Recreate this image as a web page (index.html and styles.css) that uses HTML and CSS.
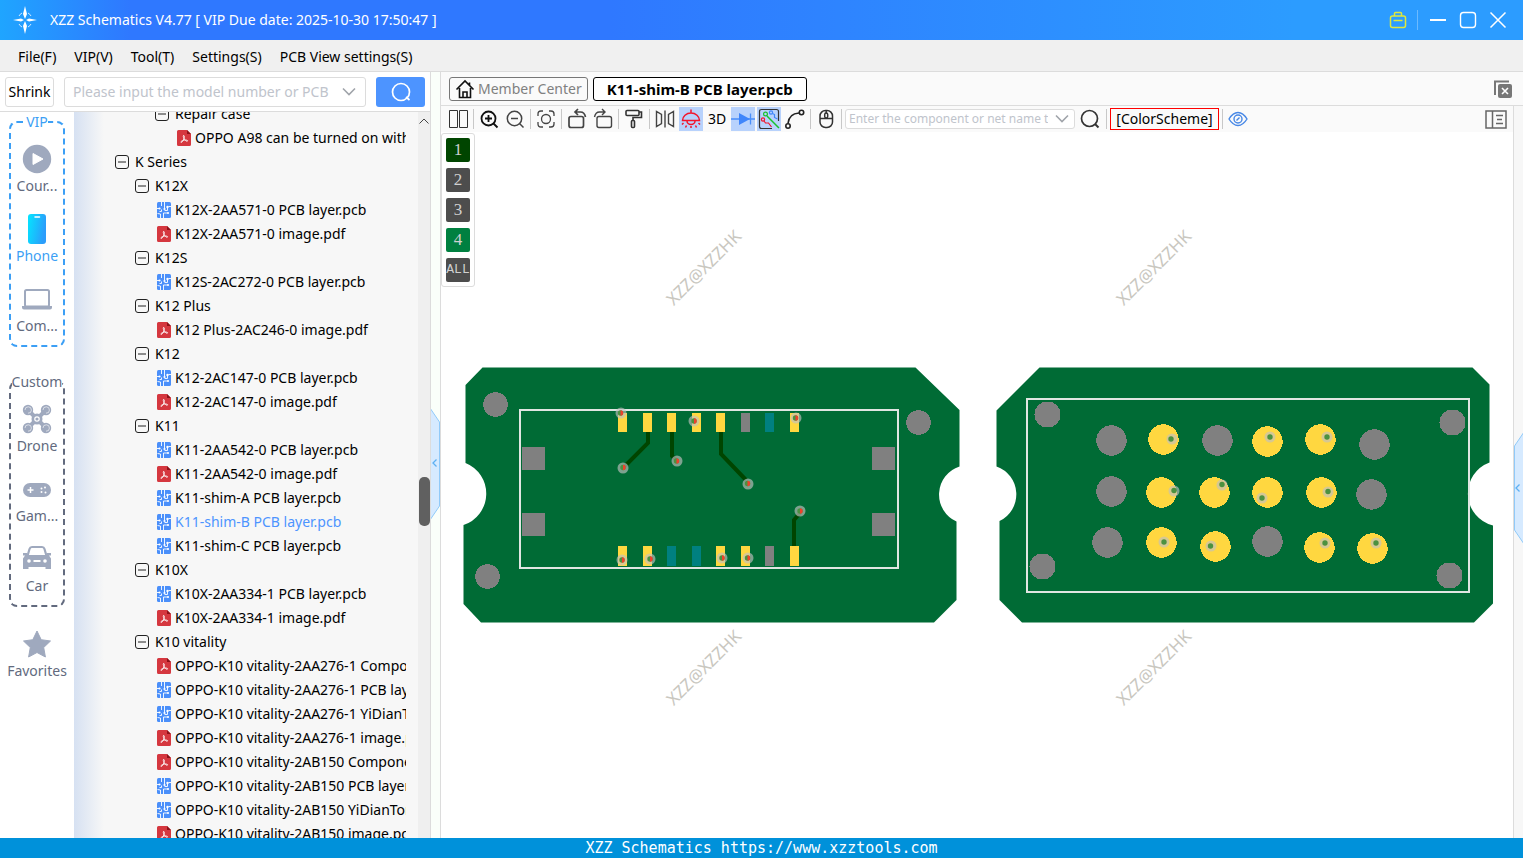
FILE: index.html
```html
<!DOCTYPE html>
<html lang="en">
<head>
<meta charset="utf-8">
<title>XZZ Schematics</title>
<link rel="stylesheet" href="styles.css">
</head>
<body>
<svg class="defs" aria-hidden="true">
  <defs>
    <linearGradient id="phone-fill" x1="0" y1="0" x2="1" y2="0.3"><stop offset="0" stop-color="#04e6ff"/><stop offset="1" stop-color="#2b9dfb"/></linearGradient>
    <symbol id="minus" viewBox="0 0 14 14"><rect x="0.5" y="0.5" width="13" height="13" rx="2.5" fill="none" stroke="#222"/><path d="M3 7h8" stroke="#222"/></symbol>
    <symbol id="pdf" viewBox="0 0 14 16"><path d="M1.500 0H10l4 4v10.500a1.500 1.500 0 0 1-1.500 1.500h-11A1.500 1.500 0 0 1 0 14.500v-13A1.500 1.500 0 0 1 1.500 0z" fill="#d5373f"/><path d="M10 0l4 4h-4z" fill="#8c1219"/><path d="M6.500 5.500c1.200-.3 1 2 .5 3.200C6 11 5 12.500 4 12.400c-1-.6 1.500-2 3.500-2.300 2-.3 3.500.3 3 1-.8.800-2.800-1.200-3.600-2.700-.5-1.200-.9-2.500-.4-2.900z" fill="none" stroke="#fff" stroke-width="0.900"/></symbol>
    <symbol id="pcb" viewBox="0 0 14 16"><rect width="14" height="16" rx="1.500" fill="#4a8ffa"/><g fill="none" stroke="#fff" stroke-width="0.900"><path d="M4.500 0v4M7.500 0v6.500M0 6.500h2M3.500 16v-4L0.500 11.500M6.500 16v-5h4M14 4.500h-2.500M10.500 6V8.500H7.500M4.500 7.500v2h-2"/></g><g fill="#fff"><circle cx="7.500" cy="7" r="1.100"/><circle cx="10.500" cy="5" r="1.200"/><circle cx="2.500" cy="6.500" r="1.100"/><circle cx="11" cy="11" r="1.100"/></g></symbol>
    <symbol id="chevron" viewBox="0 0 14 10"><path d="M1 1.500l6 6 6-6" fill="none" stroke="#a0a4aa" stroke-width="1.600"/></symbol>
    <symbol id="magnifier" viewBox="0 0 22 22"><circle cx="10.500" cy="10.500" r="8" fill="none" stroke="currentColor" stroke-width="1.700"/><path d="M16 16l3.500 3.500" stroke="currentColor" stroke-width="2"/></symbol>
  </defs>
</svg>

<div class="app">
  <header class="titlebar">
    <svg class="logo" viewBox="0 0 26 28" width="26" height="28"><g fill="none" stroke="#d5ecff" stroke-width="1"><path d="M7 10a7 7 0 0 1 3-3M16 7a7 7 0 0 1 3 3M19 18a7 7 0 0 1-3 3M10 21a7 7 0 0 1-3-3"/></g><path d="M13 0l2 8-2 5-2-5zM13 28l2-8-2-5-2 5zM1 14l8-1.600 3 1.600-3 1.600zM25 14l-8-1.600-3 1.600 3 1.600z" fill="#fff"/></svg>
    <h1 class="title">XZZ Schematics V4.77 [ VIP Due date: 2025-10-30 17:50:47 ]</h1>
    <button class="win-btn" aria-label="License"><svg viewBox="0 0 18 18" width="18" height="18" fill="none" stroke="#dfe83c" stroke-width="1.500"><rect x="1.500" y="5" width="15" height="11.500" rx="2"/><path d="M5.500 5V2.500q0-1 1-1h5q1 0 1 1V5M4.500 9.500h9"/></svg></button>
    <span class="win-sep"></span>
    <button class="win-btn" aria-label="Minimize"><svg viewBox="0 0 18 18" width="18" height="18"><path d="M1 9h16" stroke="#fff" stroke-width="2"/></svg></button>
    <button class="win-btn" aria-label="Maximize"><svg viewBox="0 0 18 18" width="18" height="18"><rect x="1.500" y="1.500" width="15" height="15" rx="3" fill="none" stroke="#fff" stroke-width="1.400"/></svg></button>
    <button class="win-btn" aria-label="Close"><svg viewBox="0 0 18 18" width="18" height="18"><path d="M1.500 1.500l15 15M16.500 1.500l-15 15" stroke="#fff" stroke-width="1.500"/></svg></button>
  </header>

  <nav class="menubar">
    <button>File(F)</button><button>VIP(V)</button><button>Tool(T)</button><button>Settings(S)</button><button>PCB View settings(S)</button>
  </nav>

  <div class="workspace">
    <section class="browser">
      <form class="search-row">
        <button type="button" class="shrink">Shrink</button>
        <div class="combo"><input type="text" aria-label="Model number" placeholder="Please input the model number or PCB"><button type="button" aria-label="Open list"><svg width="14" height="10"><use href="#chevron"/></svg></button></div>
        <button type="button" class="go" aria-label="Search"><svg viewBox="0 0 22 22" width="22" height="22"><circle cx="11" cy="11" r="8.500" fill="none" stroke="#fff" stroke-width="1.700"/><path d="M16 16l3.500 3" stroke="#fff" stroke-width="1.700"/></svg></button>
      </form>
      <div class="browser-body">
        <aside class="sidebar">
          <fieldset class="group vip"><legend>VIP</legend>
            <button class="cat"><svg viewBox="0 0 32 32" width="32" height="32"><circle cx="16" cy="16" r="14.200" fill="#9fa9be"/><path d="M12 10.500v11l10-5.500z" fill="#fff" stroke="#fff" stroke-linejoin="round"/></svg><span>Cour...</span></button>
            <button class="cat current"><svg viewBox="0 0 32 32" width="32" height="32"><rect x="7" y="1" width="18" height="30" rx="3" fill="url(#phone-fill)"/><path d="M14 4h4.500" stroke="#fff" stroke-width="1.500" stroke-linecap="round"/></svg><span>Phone</span></button>
            <button class="cat"><svg viewBox="0 0 32 32" width="32" height="32"><rect x="4" y="7" width="24" height="16.500" rx="1.500" fill="none" stroke="#9fa9be" stroke-width="2"/><path d="M1 23h11l1 1h6l1-1h11v1.500q0 2-2 2H3q-2 0-2-2z" fill="#9fa9be"/></svg><span>Com...</span></button>
          </fieldset>
          <fieldset class="group custom"><legend>Custom</legend>
            <button class="cat"><svg viewBox="0 0 32 32" width="32" height="32"><path d="M7 7l18 18M25 7L7 25" stroke="#9fa9be" stroke-width="4"/><g fill="#9fa9be"><circle cx="7" cy="7" r="5.200"/><circle cx="25" cy="7" r="5.200"/><circle cx="7" cy="25" r="5.200"/><circle cx="25" cy="25" r="5.200"/><circle cx="16" cy="16" r="5.500"/></g><g fill="none" stroke="#fff"><path d="M4 7a3.200 3.200 0 1 1 3 3.200M22 7a3.200 3.200 0 1 1 3 3.200M4 25a3.200 3.200 0 1 1 3 3.200M22 25a3.200 3.200 0 1 1 3 3.200" stroke-width="0.600"/><circle cx="16" cy="16" r="2.200" stroke-width="1.200"/></g></svg><span>Drone</span></button>
            <button class="cat"><svg viewBox="0 0 32 32" width="32" height="32"><rect x="2" y="10" width="28" height="14" rx="7" fill="#9fa9be"/><path d="M6.500 17h6M9.500 14v6" stroke="#fff" stroke-width="1.500"/><g fill="#fff"><circle cx="20.500" cy="15.500" r="1"/><circle cx="24" cy="14.500" r="1"/><circle cx="20.500" cy="19" r="1"/><circle cx="24.500" cy="19.500" r="1"/></g></svg><span>Gam...</span></button>
            <button class="cat"><svg viewBox="0 0 32 32" width="32" height="32"><path d="M6.500 13l2-7q.6-2 2.500-2h10q1.900 0 2.500 2l2 7" fill="none" stroke="#9fa9be" stroke-width="2.200"/><path d="M2 10h4v2h20v-2h4v2.500h-2l2 3V26h-5.500v-2h-17v2H2V15.500l2-3H2z" fill="#9fa9be"/><circle cx="8" cy="18" r="1.800" fill="#fff"/><circle cx="24" cy="18" r="1.800" fill="#fff"/><path d="M12.500 18h7" stroke="#fff" stroke-width="2"/></svg><span>Car</span></button>
          </fieldset>
          <button class="cat favorites"><svg viewBox="0 0 32 32" width="32" height="32"><path d="M16 3l4.200 8.700 9.300 1.300-6.800 6.500 1.700 9.500L16 24.500 7.600 29l1.700-9.500L2.500 13l9.300-1.300z" fill="#9fa9be" stroke="#9fa9be" stroke-linejoin="round"/></svg><span>Favorites</span></button>
        </aside>

        <div class="tree-pane">
          <ul class="tree">
            <li class="d3"><svg><use href="#minus"/></svg>Repair case</li>
            <li class="d4 leaf"><svg><use href="#pdf"/></svg>OPPO A98 can be turned on without display</li>
            <li class="d1"><svg><use href="#minus"/></svg>K Series</li>
            <li class="d2"><svg><use href="#minus"/></svg>K12X</li>
            <li class="d3 leaf"><svg><use href="#pcb"/></svg>K12X-2AA571-0 PCB layer.pcb</li>
            <li class="d3 leaf"><svg><use href="#pdf"/></svg>K12X-2AA571-0 image.pdf</li>
            <li class="d2"><svg><use href="#minus"/></svg>K12S</li>
            <li class="d3 leaf"><svg><use href="#pcb"/></svg>K12S-2AC272-0 PCB layer.pcb</li>
            <li class="d2"><svg><use href="#minus"/></svg>K12 Plus</li>
            <li class="d3 leaf"><svg><use href="#pdf"/></svg>K12 Plus-2AC246-0 image.pdf</li>
            <li class="d2"><svg><use href="#minus"/></svg>K12</li>
            <li class="d3 leaf"><svg><use href="#pcb"/></svg>K12-2AC147-0 PCB layer.pcb</li>
            <li class="d3 leaf"><svg><use href="#pdf"/></svg>K12-2AC147-0 image.pdf</li>
            <li class="d2"><svg><use href="#minus"/></svg>K11</li>
            <li class="d3 leaf"><svg><use href="#pcb"/></svg>K11-2AA542-0 PCB layer.pcb</li>
            <li class="d3 leaf"><svg><use href="#pdf"/></svg>K11-2AA542-0 image.pdf</li>
            <li class="d3 leaf"><svg><use href="#pcb"/></svg>K11-shim-A PCB layer.pcb</li>
            <li class="d3 leaf selected"><svg><use href="#pcb"/></svg>K11-shim-B PCB layer.pcb</li>
            <li class="d3 leaf"><svg><use href="#pcb"/></svg>K11-shim-C PCB layer.pcb</li>
            <li class="d2"><svg><use href="#minus"/></svg>K10X</li>
            <li class="d3 leaf"><svg><use href="#pcb"/></svg>K10X-2AA334-1 PCB layer.pcb</li>
            <li class="d3 leaf"><svg><use href="#pdf"/></svg>K10X-2AA334-1 image.pdf</li>
            <li class="d2"><svg><use href="#minus"/></svg>K10 vitality</li>
            <li class="d3 leaf"><svg><use href="#pdf"/></svg>OPPO-K10 vitality-2AA276-1 Component.pdf</li>
            <li class="d3 leaf"><svg><use href="#pcb"/></svg>OPPO-K10 vitality-2AA276-1 PCB layer.pcb</li>
            <li class="d3 leaf"><svg><use href="#pcb"/></svg>OPPO-K10 vitality-2AA276-1 YiDianTong.pcb</li>
            <li class="d3 leaf"><svg><use href="#pdf"/></svg>OPPO-K10 vitality-2AA276-1 image.pdf</li>
            <li class="d3 leaf"><svg><use href="#pdf"/></svg>OPPO-K10 vitality-2AB150 Component.pdf</li>
            <li class="d3 leaf"><svg><use href="#pcb"/></svg>OPPO-K10 vitality-2AB150 PCB layer.pcb</li>
            <li class="d3 leaf"><svg><use href="#pcb"/></svg>OPPO-K10 vitality-2AB150 YiDianTong.pcb</li>
            <li class="d3 leaf"><svg><use href="#pdf"/></svg>OPPO-K10 vitality-2AB150 image.pdf</li>
          </ul>
        </div>
        <div class="scrollbar"><svg viewBox="0 0 12 8" width="12" height="8"><path d="M1.500 6.500L6 2l4.500 4.500" fill="none" stroke="#444"/></svg><div class="track"><div class="thumb"></div></div></div>
      </div>
    </section>

    <div class="splitter"><svg viewBox="0 0 9 112" width="9" height="112"><path d="M-1 0L8.500 14v84L-1 112z" fill="#d6eaff" stroke="#90caf9"/><path d="M5.500 51.500l-3.500 3.500 3.500 3.500" fill="none" stroke="#5eb0f2" stroke-width="1.300"/></svg></div>

    <main class="viewer">
      <div class="tabs">
        <button class="tab"><svg viewBox="0 0 20 20" width="20" height="20" fill="none" stroke="#111" stroke-width="1.600"><path d="M1.500 10.500L10 2l8.500 8.500M4.500 9v9.500h11V9M8 18v-5h4v5M14.500 6V3.500"/></svg>Member Center</button>
        <button class="tab active">K11-shim-B PCB layer.pcb</button>
        <button class="close-all" aria-label="Close all tabs"><svg viewBox="0 0 18 18" width="18" height="18"><path d="M1 15V1.500h14" fill="none" stroke="#777" stroke-width="2"/><rect x="4" y="4" width="14" height="14" rx="2" fill="#777"/><path d="M8 8l6 6M14 8l-6 6" stroke="#fff" stroke-width="1.600"/></svg></button>
      </div>
      <div class="viewer-body">
        <div class="stage">
          <div class="toolbar">
            <button class="tool" aria-label="Split view"><svg viewBox="0 0 24 24"><path d="M3.500 3.500h8v17h-8zM13.500 3.500h8v17h-8z" fill="none" stroke="#333" stroke-width="1"/></svg></button>
            <span class="sep"></span>
            <button class="tool" aria-label="Zoom in"><svg viewBox="0 0 24 24" fill="none" stroke="#111" stroke-width="1.800"><circle cx="11.500" cy="11.500" r="7"/><path d="M16.500 16.500l4 4M8 11.500h7M11.500 8v7"/></svg></button>
            <button class="tool" aria-label="Zoom out"><svg viewBox="0 0 24 24" fill="none" stroke="#444" stroke-width="1.500"><circle cx="11.500" cy="11.500" r="7.200"/><path d="M16.500 16.500l4 4M8 11.500h7"/></svg></button>
            <span class="sep"></span>
            <button class="tool" aria-label="Fit"><svg viewBox="0 0 24 24" fill="none" stroke="#444" stroke-width="1.300"><circle cx="12" cy="12" r="4.500"/><path d="M4 9V7q0-3 3-3h2M15 4h2q3 0 3 3v2M20 15v2q0 3-3 3h-2M9 20H7q-3 0-3-3v-2"/></svg></button>
            <span class="sep"></span>
            <button class="tool" aria-label="Rotate left"><svg viewBox="0 0 24 24" fill="none" stroke="#444" stroke-width="1.700"><rect x="4" y="9.500" width="14.500" height="11" rx="2"/><path d="M20.500 10q-1-5-5-5H10M13 2l-3 3 3 3"/></svg></button>
            <button class="tool" aria-label="Rotate right"><svg viewBox="0 0 24 24" fill="none" stroke="#444" stroke-width="1.400"><rect x="6" y="9.500" width="14.500" height="11" rx="2"/><path d="M3.500 10q1-5 5-5H14M11 2l3 3-3 3"/></svg></button>
            <span class="sep"></span>
            <button class="tool" aria-label="Paint"><svg viewBox="0 0 24 24" fill="none" stroke="#333" stroke-width="1.600"><rect x="4" y="3.500" width="13" height="5" rx="1"/><path d="M17 5h2.500v5.500H11v3"/><rect x="9.500" y="13.500" width="3" height="7" rx="1"/></svg></button>
            <span class="sep"></span>
            <button class="tool" aria-label="Mirror"><svg viewBox="0 0 24 24" fill="none" stroke="#444" stroke-width="1.400"><path d="M3.500 4.500v15l5-3v-9zM12 3.500v17M20.500 4.500v15l-5-3v-9z"/></svg></button>
            <button class="tool on" aria-label="Lamp"><svg viewBox="0 0 24 24" fill="none" stroke="#f2152b" stroke-width="1.500"><path d="M3.500 13.500a8.500 7.500 0 0 1 17 0zM12 2.500v3.500M8 14a4 3.500 0 0 0 8 0M4.500 16l-1.500 1.500M19.500 16l1.500 1.500M7.500 18.500l-1 2M12 19v2M16.500 18.500l1 2"/></svg></button>
            <button class="tool">3D</button>
            <button class="tool on" aria-label="Diode"><svg viewBox="0 0 24 24"><path d="M0 12h24M19.500 6.500v11" stroke="#4a8ffa" stroke-width="1.300"/><path d="M8 6v12l11-6z" fill="#3f86fb"/></svg></button>
            <button class="tool on" aria-label="Routing"><svg viewBox="0 0 24 24" fill="none" stroke-width="1.200"><path d="M15 21.500H4.500q-2 0-2-2v-15q0-2 2-2h15q2 0 2 2V14" stroke="#333"/><path d="M10 9l12 12" stroke="#18c22c" stroke-width="1.500"/><circle cx="8.500" cy="7" r="1.900" stroke="#18c22c"/><circle cx="14" cy="5.500" r="1.600" stroke="#3f86fb"/><path d="M15.500 6.500l2 1v3l3 1.500" stroke="#3f86fb"/><circle cx="6" cy="12.500" r="1.600" stroke="#f2152b"/><path d="M7 14l1.500 2h3l3 4" stroke="#f2152b"/></svg></button>
            <button class="tool" aria-label="Curve"><svg viewBox="0 0 24 24" fill="none" stroke="#222" stroke-width="1.600"><circle cx="5" cy="19" r="2.200"/><circle cx="18.500" cy="5.500" r="2.200"/><path d="M5 16.500Q6 6.500 16 6"/></svg></button>
            <span class="sep"></span>
            <button class="tool" aria-label="Mouse"><svg viewBox="0 0 24 24" fill="none" stroke="#333" stroke-width="1.500"><rect x="6" y="3.500" width="12.500" height="17" rx="5.500"/><path d="M6 11.500h12.500M12.200 3.500v3"/><rect x="10.700" y="6" width="3" height="5" rx="1.500"/></svg></button>
            <span class="sep"></span>
            <div class="combo net"><input type="text" aria-label="Component or net name" placeholder="Enter the component or net name to search"><button type="button" aria-label="Open list"><svg width="14" height="10"><use href="#chevron"/></svg></button></div>
            <button class="tool find" aria-label="Find"><svg><use href="#magnifier"/></svg></button>
            <span class="sep"></span>
            <button class="scheme">[ColorScheme]</button>
            <span class="sep"></span>
            <button class="tool" aria-label="Show"><svg viewBox="0 0 24 24" fill="none" stroke="#4687e6" stroke-width="1.400"><path d="M3 12q4-6.500 9-6.500t9 6.500q-4 6.500-9 6.500T3 12z"/><circle cx="12" cy="12" r="4"/><path d="M10.500 13.500l3-3"/></svg></button>
            <button class="tool panel" aria-label="Side panel"><svg viewBox="0 0 24 24" fill="none" stroke="#666" stroke-width="1.500"><rect x="2" y="4" width="20" height="17"/><path d="M8.500 4v17M12 8.500h7M13 12.500h5M12 16.500h7"/></svg></button>
          </div>
          <div class="canvas">
            <svg class="board" viewBox="441 132 1072 706" role="img" aria-label="PCB layout">
              <g class="watermark">
                <text transform="translate(708 272) rotate(-45)">XZZ@XZZHK</text>
                <text transform="translate(1158 272) rotate(-45)">XZZ@XZZHK</text>
                <text transform="translate(708 672) rotate(-45)">XZZ@XZZHK</text>
                <text transform="translate(1158 672) rotate(-45)">XZZ@XZZHK</text>
              </g>
              <g class="substrate">
                <path d="M482.500 367.500H915.500L959.500 410V466.500A29.500 29.500 0 0 0 956.500 521.500V600L934 622.500H481L463.500 604V525A33 33 0 0 0 465.500 463V385z"/>
                <path d="M1039.500 367.500H1472.500L1489.500 384.500V462.500A33 33 0 0 0 1493 525.500V603.500L1474 622.500H1022L999.500 600V521A29.500 29.500 0 0 0 996.500 466.500V410.500z"/>
              </g>
              <g class="outline"><rect x="520" y="410" width="378" height="158"/><rect x="1027" y="399" width="442" height="193"/></g>
              <g class="trace"><path d="M648 430V443L625 466"/><path d="M672 430V456L676 460"/><path d="M721 430V454L746 480"/><path d="M794 548V520L800 513"/></g>
              <g class="gray">
                <circle cx="495.500" cy="404.500" r="12.300"/><circle cx="918.500" cy="422.500" r="12.300"/><circle cx="487.500" cy="576.500" r="12.300"/>
                <rect x="522" y="447" width="23" height="23"/><rect x="522" y="513" width="23" height="23"/><rect x="872" y="447" width="23" height="23"/><rect x="872" y="513" width="23" height="23"/>
                <rect x="741" y="413" width="9" height="19"/><rect x="765" y="546" width="9" height="20"/>
                <circle cx="1047.500" cy="414.500" r="13"/><circle cx="1452.500" cy="422.500" r="13"/><circle cx="1042.500" cy="566.500" r="13"/><circle cx="1449.500" cy="575.500" r="13"/>
                <circle cx="1111.500" cy="440.500" r="15.200"/><circle cx="1217.500" cy="440.500" r="15.200"/><circle cx="1374.500" cy="444.500" r="15.200"/><circle cx="1111.500" cy="491.500" r="15.200"/><circle cx="1371.500" cy="494.500" r="15.200"/><circle cx="1107.500" cy="542.500" r="15.200"/><circle cx="1267.500" cy="541.500" r="15.200"/>
              </g>
              <g class="teal"><rect x="765" y="413" width="9" height="19"/><rect x="667" y="546" width="9" height="20"/><rect x="692" y="546" width="9" height="20"/></g>
              <g class="gold">
                <rect x="618" y="413" width="9" height="19"/><rect x="643" y="413" width="9" height="19"/><rect x="667" y="413" width="9" height="19"/><rect x="692" y="413" width="9" height="19"/><rect x="716" y="413" width="9" height="19"/><rect x="790" y="413" width="9" height="19"/>
                <rect x="618" y="546" width="9" height="20"/><rect x="643" y="546" width="9" height="20"/><rect x="716" y="546" width="9" height="20"/><rect x="741" y="546" width="9" height="20"/><rect x="790" y="546" width="9" height="20"/>
                <circle cx="1163.500" cy="439.500" r="15.200"/><circle cx="1267.500" cy="441.500" r="15.200"/><circle cx="1320.500" cy="439.500" r="15.200"/>
                <circle cx="1161.500" cy="492.500" r="15.200"/><circle cx="1214.500" cy="492.500" r="15.200"/><circle cx="1267.500" cy="492.500" r="15.200"/><circle cx="1321.500" cy="492.500" r="15.200"/>
                <circle cx="1161.500" cy="542.500" r="15.200"/><circle cx="1215.500" cy="546.500" r="15.200"/><circle cx="1319.500" cy="547.500" r="15.200"/><circle cx="1372.500" cy="548.500" r="15.200"/>
              </g>
              <g class="ring">
                <circle cx="621" cy="413" r="5.500"/><circle cx="694" cy="421" r="5.500"/><circle cx="796" cy="418" r="5.500"/><circle cx="623" cy="468" r="5.500"/><circle cx="677" cy="461" r="5.500"/><circle cx="748" cy="484" r="5.500"/><circle cx="800" cy="511" r="5.500"/><circle cx="622" cy="560" r="5.500"/><circle cx="650" cy="559" r="5.500"/><circle cx="722" cy="558" r="5.500"/><circle cx="748" cy="558" r="5.500"/>
                <circle cx="1172" cy="439" r="5.500"/><circle cx="1270" cy="437" r="5.500"/><circle cx="1327" cy="437" r="5.500"/><circle cx="1174" cy="491" r="5.500"/><circle cx="1222" cy="485" r="5.500"/><circle cx="1262" cy="498" r="5.500"/><circle cx="1328" cy="492" r="5.500"/><circle cx="1164" cy="542" r="5.500"/><circle cx="1211" cy="546" r="5.500"/><circle cx="1325" cy="543" r="5.500"/><circle cx="1376" cy="543" r="5.500"/>
              </g>
              <g class="drill">
                <circle cx="620.500" cy="413" r="2.700"/><circle cx="694" cy="421" r="2.700"/><circle cx="795.500" cy="418" r="2.700"/><circle cx="623" cy="467.500" r="2.700"/><circle cx="676.500" cy="461" r="2.700"/><circle cx="747.500" cy="483.500" r="2.700"/><circle cx="800" cy="511" r="2.700"/><circle cx="622" cy="560" r="2.700"/><circle cx="650" cy="559" r="2.700"/><circle cx="722" cy="558" r="2.700"/><circle cx="747.500" cy="558" r="2.700"/>
                <circle cx="1171" cy="439" r="2.700"/><circle cx="1270" cy="437" r="2.700"/><circle cx="1327" cy="437" r="2.700"/><circle cx="1174" cy="490.500" r="2.700"/><circle cx="1222" cy="484.500" r="2.700"/><circle cx="1262" cy="498" r="2.700"/><circle cx="1328" cy="491.500" r="2.700"/><circle cx="1164" cy="542" r="2.700"/><circle cx="1210.500" cy="546" r="2.700"/><circle cx="1325" cy="543" r="2.700"/><circle cx="1376" cy="543" r="2.700"/>
              </g>
              <g class="hot">
                <path d="M620.500 410.300a2.700 2.700 0 0 1 0 5.400zM694 418.300a2.700 2.700 0 0 1 0 5.400zM795.500 415.300a2.700 2.700 0 0 1 0 5.400zM623 464.800a2.700 2.700 0 0 1 0 5.400zM676.500 458.300a2.700 2.700 0 0 1 0 5.400zM747.500 480.800a2.700 2.700 0 0 1 0 5.400zM800 508.300a2.700 2.700 0 0 1 0 5.400zM622 557.300a2.700 2.700 0 0 1 0 5.400zM650 556.300a2.700 2.700 0 0 1 0 5.400zM722 555.300a2.700 2.700 0 0 1 0 5.400zM747.500 555.300a2.700 2.700 0 0 1 0 5.400z"/>
              </g>
            </svg>
            <div class="layers">
              <button class="l1">1</button><button>2</button><button>3</button><button class="l4">4</button><button class="all">ALL</button>
            </div>
          </div>
        </div>
        <div class="edge"><svg viewBox="0 0 9 112" width="9" height="112"><path d="M10 0L0.500 14v84L10 112z" fill="#d6eaff" stroke="#90caf9"/><path d="M5.500 52.500l-3.500 3.500 3.500 3.500" fill="none" stroke="#5eb0f2" stroke-width="1.300"/></svg></div>
      </div>
    </main>
  </div>

  <footer class="statusbar">XZZ Schematics https://www.xzztools.com</footer>
</div>
</body>
</html>
```

FILE: styles.css
```css
* { box-sizing: border-box; }
body { margin: 0; font: 14px/20px "Noto Sans", "Open Sans", sans-serif; color: #000; }
button { font: inherit; color: inherit; background: none; border: 0; padding: 0; margin: 0; }
input { font: inherit; }
svg { display: block; flex: none; }
.defs { position: absolute; width: 0; height: 0; }

.app { display: flex; flex-direction: column; height: 100vh; overflow: hidden; background: #fff; }

.titlebar { display: flex; align-items: center; height: 40px; flex: none; padding: 0 10px 0 12px; color: #fff; background: linear-gradient(90deg, #1fa5ff 0, #2f78ff 130px, #2f78ff 40%, #2c9cff 85%, #2c9cff 100%); }
.title { margin: 0 auto 0 12px; font-size: 14px; font-weight: 400; white-space: nowrap; }
.win-btn { width: 30px; height: 40px; display: grid; place-items: center; }
.win-sep { width: 1px; height: 20px; margin: 0 5px 0 4px; background: #6cbaff; }

.menubar { display: flex; gap: 18px; height: 32px; flex: none; padding: 2px 18px 0; background: #f0f0f0; border-bottom: 1px solid #dcdcdc; }

.workspace { display: flex; flex: 1; min-height: 0; }
.browser { width: 431px; flex: none; display: flex; flex-direction: column; border-right: 1px solid #dcdcdc; min-height: 0; }
.search-row { display: flex; align-items: center; height: 40px; flex: none; padding: 1px 5px 0; border-bottom: 1px solid #dcdcdc; background: #fff; }
.shrink { width: 49px; height: 30px; margin-right: 10px; border: 1px solid #dcdcdc; border-radius: 3px; }
.combo { display: flex; align-items: center; flex: 1; height: 30px; min-width: 0; padding: 0 9px 0 8px; background: #fff; border: 1px solid #dcdcdc; border-radius: 3px; }
.combo input { flex: 1; min-width: 0; padding: 0; margin-right: 7px; border: 0; outline: 0; background: none; }
.combo input::placeholder { color: #c0c4cc; opacity: 1; }
.go { width: 49px; height: 30px; margin-left: 10px; display: grid; place-items: center; background: #4d94ff; border-radius: 3px; }
.browser-body { display: flex; flex: 1; min-height: 0; }

.sidebar { width: 74px; flex: none; padding: 0 9px; background: #fff; overflow: hidden; }
.group { display: flex; flex-direction: column; min-width: 0; margin: 0; padding: 0 0 3px; border: 2px dashed; border-radius: 8px; }
.group legend { margin: 0 auto; padding: 0; height: 20px; }
.vip { border-color: #3c9ff5; color: #3c9ff5; }
.custom { margin-top: 25px; border-color: #626a7e; color: #626a7e; }
.cat { width: 100%; height: 70px; padding-top: 11px; display: flex; flex-direction: column; align-items: center; gap: 1px; color: #626a7e; white-space: nowrap; }
.cat.current { color: #3c9ff5; }
.favorites { margin-top: 10px; }

.tree-pane { flex: 1; min-width: 0; overflow: hidden; padding-right: 12px; background: linear-gradient(90deg, #d6e1f2 0, #f7f7f7 30px); }
.tree { list-style: none; margin: -10px 0 0; padding: 0; overflow: hidden; }
.tree li { display: flex; align-items: center; height: 24px; white-space: nowrap; }
.tree svg { width: 14px; height: 14px; margin-right: 6px; }
.tree .leaf svg { height: 16px; margin: 0 4px 0 2px; }
.d1 { padding-left: 41px; }
.d2 { padding-left: 61px; }
.d3 { padding-left: 81px; }
.d4 { padding-left: 101px; }
.selected { color: #4d94ff; }
.scrollbar { width: 12px; flex: none; display: flex; flex-direction: column; padding: 5px 0; background: #efefef; }
.track { flex: 1; padding: 352px 0 0 1px; }
.thumb { height: 49px; border-radius: 5px; background: #606060; }

.splitter { width: 9px; flex: none; display: flex; align-items: center; padding-top: 18px; background: #fafffa; }
.viewer { flex: 1; min-width: 0; display: flex; flex-direction: column; border-left: 1px solid #dcdcdc; }
.tabs { display: flex; align-items: center; gap: 5px; height: 34px; flex: none; padding: 0 11px 0 8px; background: #fafafa; border-bottom: 1px solid #dcdcdc; }
.tab { display: flex; align-items: center; gap: 3px; height: 24px; padding: 0 5px; color: #808080; border: 1px solid #777; border-radius: 3px; }
.tab.active { padding: 0 13px; color: #000; font-size: 15px; font-weight: 700; border-color: #000; background: #fff; }
.close-all { margin-left: auto; }
.viewer-body { display: flex; flex: 1; min-height: 0; }
.stage { flex: 1; min-width: 0; display: flex; flex-direction: column; }
.toolbar { display: flex; align-items: center; gap: 2px; height: 26px; flex: none; padding: 0 5px; background: #fafafa; }
.tool { width: 24px; height: 24px; flex: none; }
.tool svg { width: 24px; height: 24px; }
.tool.on { background: #b8d2fc; }
.tool.find { width: 26px; color: #333; display: grid; place-items: center; }
.tool.find svg { width: 22px; height: 22px; }
.tool.panel { margin-left: auto; }
.sep { width: 3px; height: 20px; flex: none; background: linear-gradient(#c8c8c8, #c8c8c8) center / 1px 100% no-repeat; }
.net { flex: 0 1 230px; height: 20px; padding: 0 5px 0 3px; font-size: 12px; }
.scheme { height: 22px; width: 109px; border: 1px solid #f00; }

.canvas { position: relative; flex: 1; min-height: 0; background: #fff; }
.board { width: 100%; height: 100%; }
.layers { position: absolute; left: 0; top: 1px; display: flex; flex-direction: column; gap: 6px; padding: 4px; background: #fff; border: 1px solid #dcdcdc; border-radius: 3px; }
.layers button { width: 24px; height: 24px; border-radius: 2px; background: #4d4d4d; color: #d0d0d0; font: 17px/24px "Liberation Serif", serif; }
.layers .l1 { background: #004500; }
.layers .l4 { background: #008040; }
.layers .all { font: 13px/24px "Liberation Mono", monospace; }

.watermark { font-size: 17px; fill: #c9c7bf; text-anchor: middle; }
.substrate { fill: #006b35; }
.outline { fill: none; stroke: #e0e6e2; stroke-width: 2; }
.trace { fill: none; stroke: #004500; stroke-width: 4; }
.gray { fill: #808080; shape-rendering: crispEdges; }
.teal { fill: #008080; }
.gold { fill: #ffd740; shape-rendering: crispEdges; }
.ring { fill: #c0c0c0; fill-opacity: 0.65; }
.drill { fill: #4c9140; }
.hot { fill: #f0402c; }

.edge { width: 10px; flex: none; display: flex; align-items: center; padding-top: 32px; background: #f7f7f7; border-left: 1px solid #dcdcdc; }
.statusbar { height: 20px; flex: none; text-align: center; color: #fff; background: #0091da; font: 15px/20px "DejaVu Sans Mono", monospace; }
```
